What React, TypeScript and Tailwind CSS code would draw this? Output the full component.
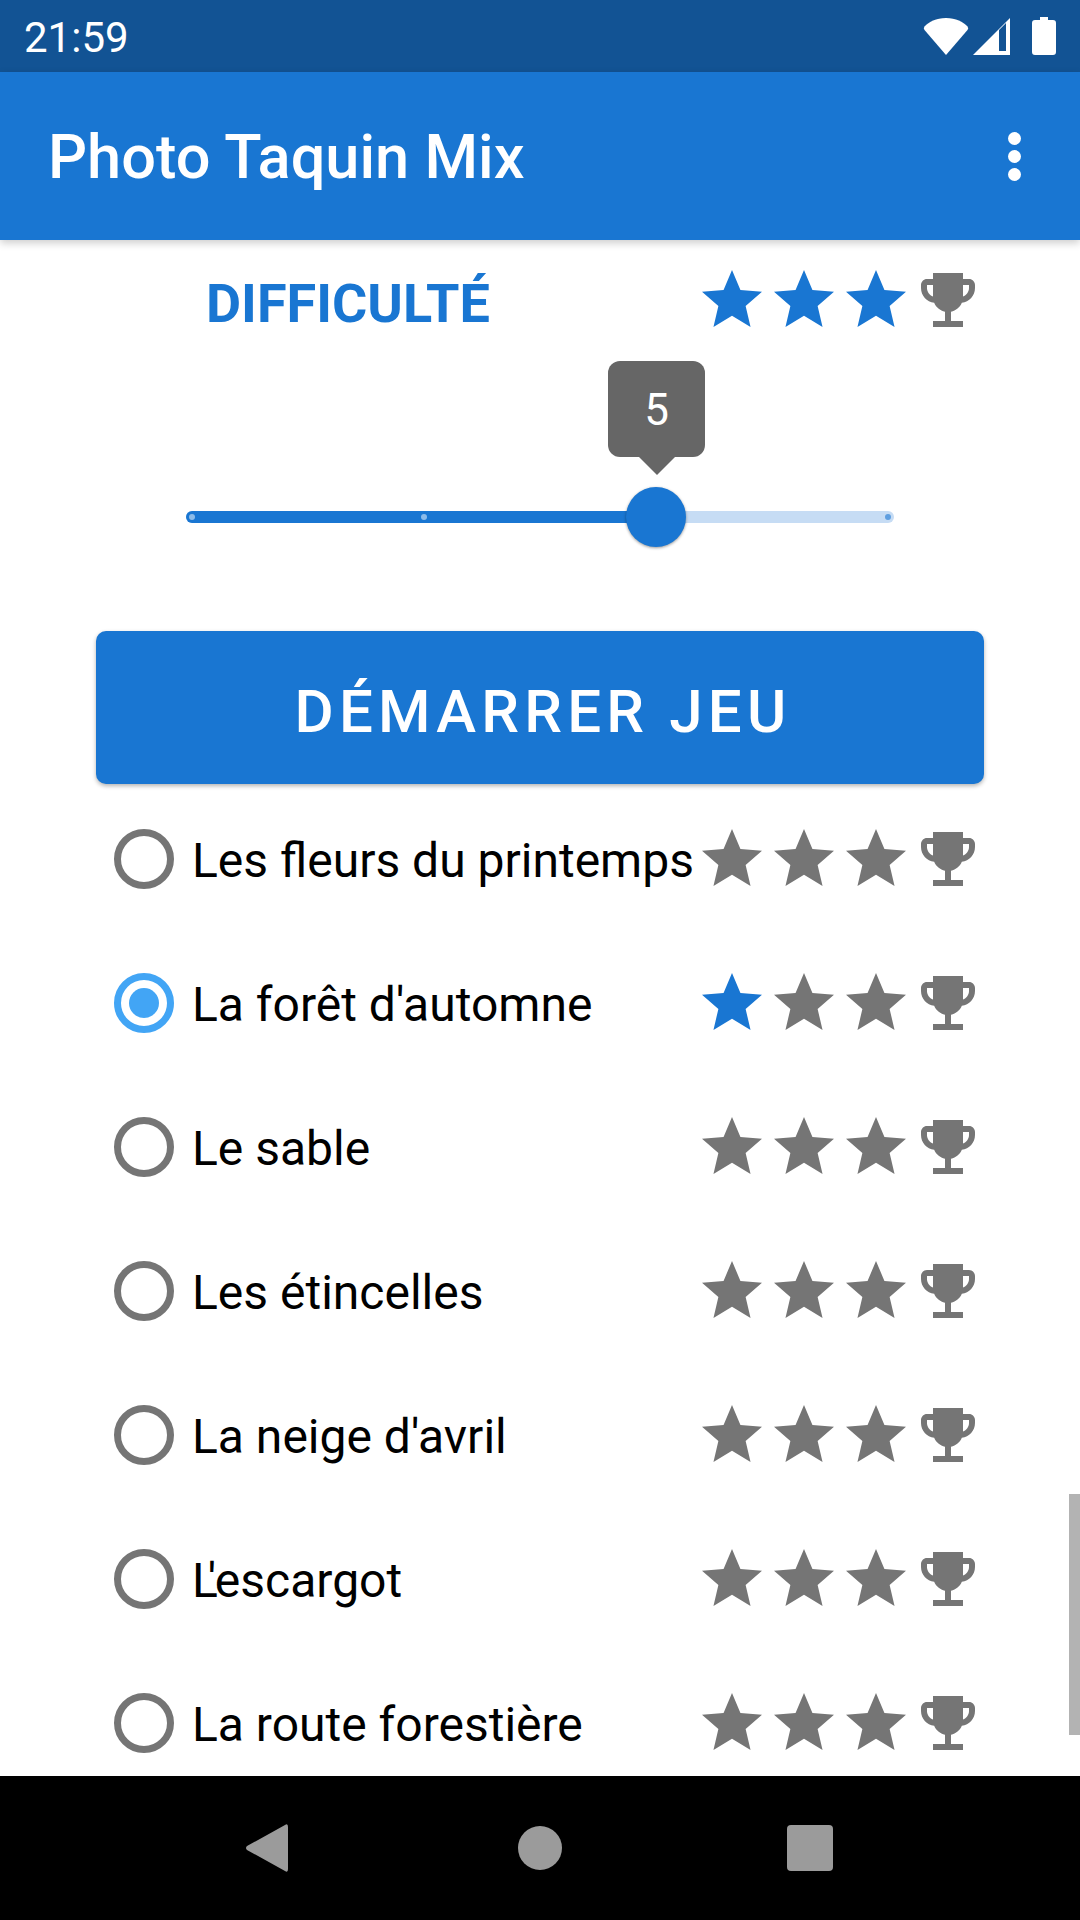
const STAR = "M12 17.27L18.18 21l-1.64-7.03L22 9.24l-7.19-.61L12 2 9.19 8.63 2 9.24l5.46 4.73L5.82 21z";
const TROPHY = "M19 5h-2V3H7v2H5c-1.1 0-2 .9-2 2v1c0 2.55 1.92 4.63 4.39 4.94.63 1.5 1.98 2.63 3.61 2.96V19H7v2h10v-2h-4v-3.1c1.63-.33 2.98-1.46 3.61-2.96C19.08 12.63 21 10.55 21 8V7c0-1.1-.9-2-2-2zM5 8V7h2v3.82C5.84 10.4 5 9.3 5 8zm14 0c0 1.3-.84 2.4-2 2.82V7h2v1z";

function Rating({ blue }: { blue: number }) {
  return (
    <div className="flex shrink-0">
      {[0, 1, 2].map((i) => (
        <svg key={i} viewBox="0 0 24 24" className={i < blue ? "w-[72px] h-[72px] fill-[#1976d2]" : "w-[72px] h-[72px] fill-[#757575]"}>
          <path d={STAR} />
        </svg>
      ))}
      <svg viewBox="0 0 24 24" className="w-[72px] h-[72px] fill-[#757575]">
        <path d={TROPHY} />
      </svg>
    </div>
  );
}

function Row({ label, selected, stars = 0 }: { label: React.ReactNode; selected?: boolean; stars?: number }) {
  return (
    <div className="h-[144px] shrink-0 flex items-center pl-[114px] pr-[96px]">
      <div className={selected ? "w-[60px] h-[60px] shrink-0 rounded-full border-[7px] border-[#42a5f5] flex items-center justify-center" : "w-[60px] h-[60px] shrink-0 rounded-full border-[7px] border-[#757575] flex items-center justify-center"}>
        {selected && <div className="w-[30px] h-[30px] rounded-full bg-[#42a5f5]" />}
      </div>
      <div className="ml-[18px] pt-[4px] flex-1 text-[48px] leading-[60px] text-black whitespace-nowrap [font-feature-settings:'liga','kern'] [text-rendering:optimizeLegibility]">{label}</div>
      <Rating blue={stars} />
    </div>
  );
}

export default function App() {
  return (
    <div className="w-[1080px] h-[1920px] flex flex-col bg-white overflow-hidden font-['Roboto',sans-serif]">
      <div className="h-[72px] shrink-0 bg-[#125394] flex items-center pl-[24px] pr-[24px] text-white">
        <span className="text-[42px] leading-[68px] pt-[4px]">21:59</span>
        <div className="ml-auto flex items-center">
          <svg width="46" height="38" viewBox="0 0 46 38" className="fill-white">
            <path d="M23 38 L1.5 13 Q0 11 1.5 9.5 C6 5 13 1 23 1 C33 1 40 5 44.5 9.5 Q46 11 44.5 13 Z" />
          </svg>
          <svg width="40" height="38" viewBox="0 0 40 38" className="ml-[3px]">
            <path d="M38 1 V38 H1 Z M34 6 V34 H27 V13 Z" fill="#fff" fillRule="evenodd" />
          </svg>
          <svg width="24" height="38" viewBox="0 0 24 38" className="ml-[20px] fill-white">
            <path d="M8 0 H16 V3 H21 Q24 3 24 6 V35 Q24 38 21 38 H3 Q0 38 0 35 V6 Q0 3 3 3 H8 Z" />
          </svg>
        </div>
      </div>

      <div className="h-[168px] shrink-0 bg-[#1976d2] flex items-center pl-[48px] pr-[59px] text-white relative z-10 shadow-[0_3px_8px_rgba(0,0,0,0.2)]">
        <span className="text-[61.3px] leading-[72px] pt-[2px] font-medium">Photo Taquin Mix</span>
        <div className="ml-auto flex flex-col gap-[5px]">
          <div className="w-[13px] h-[13px] rounded-full bg-white" />
          <div className="w-[13px] h-[13px] rounded-full bg-white" />
          <div className="w-[13px] h-[13px] rounded-full bg-white" />
        </div>
      </div>

      <div className="flex-1 min-h-0 relative overflow-hidden flex flex-col">
        <div className="mt-[24px] h-[72px] shrink-0 flex items-center pl-[206px] pr-[96px]">
          <span className="flex-1 text-[54px] leading-[64px] pt-[8px] font-bold text-[#1976d2]">DIFFICULTÉ</span>
          <Rating blue={3} />
        </div>

        <div className="h-[295px] shrink-0 relative">
          <div className="absolute left-[186px] top-[175px] w-[708px] h-[12px] rounded-full bg-[#c6dcf4]" />
          <div className="absolute left-[186px] top-[175px] w-[470px] h-[12px] rounded-l-full bg-[#1976d2]" />
          <div className="absolute left-[189px] top-[178px] w-[6px] h-[6px] rounded-full bg-[#8cbbe9]" />
          <div className="absolute left-[421px] top-[178px] w-[6px] h-[6px] rounded-full bg-[#8cbbe9]" />
          <div className="absolute left-[885px] top-[178px] w-[6px] h-[6px] rounded-full bg-[#5f9fe0]" />
          <div className="absolute left-[626px] top-[151px] w-[60px] h-[60px] rounded-full bg-[#1976d2] shadow-[0_1px_3px_rgba(0,0,0,0.4)]" />
          <div className="absolute left-[608px] top-[25px] w-[97px] h-[96px] rounded-[12px] bg-[#666666] flex items-center justify-center pt-[2px] text-white text-[44px]">5</div>
          <svg width="36" height="18" viewBox="0 0 36 18" className="absolute left-[639px] top-[121px] fill-[#666666]">
            <path d="M0 0 H36 L18 18 Z" />
          </svg>
        </div>

        <div className="mx-[96px] h-[153px] shrink-0 rounded-[10px] bg-[#1976d2] flex items-center justify-center pt-[8px] pl-[6px] text-white text-[60px] font-medium tracking-[5.2px] shadow-[0_2px_4px_rgba(0,0,0,0.3)]">
          DÉMARRER JEU
        </div>

        <div className="mt-[3px] flex flex-col">
          <Row label="Les fleurs du printemps" />
          <Row label="La forêt d'automne" selected stars={1} />
          <Row label="Le sable" />
          <Row label="Les étincelles" />
          <Row label="La neige d'avril" />
          <Row label={<><span className="tracking-[-10px]">L</span>'escargot</>} />
          <Row label="La route forestière" />
        </div>

        <div className="absolute right-0 top-[1254px] w-[11px] h-[241px] bg-[#b3b3b3]" />
      </div>

      <div className="h-[144px] shrink-0 bg-black flex items-center relative">
        <svg width="44" height="50" viewBox="0 0 44 50" className="absolute left-[245px] top-[47px] fill-[#9b9b9b]">
          <path d="M40 2 Q43 0 43 4 V46 Q43 50 40 48 L2 27 Q0 25 2 23 Z" />
        </svg>
        <div className="absolute left-[518px] top-[50px] w-[44px] h-[44px] rounded-full bg-[#9b9b9b]" />
        <div className="absolute left-[787px] top-[49px] w-[46px] h-[46px] rounded-[4px] bg-[#9b9b9b]" />
      </div>
    </div>
  );
}
